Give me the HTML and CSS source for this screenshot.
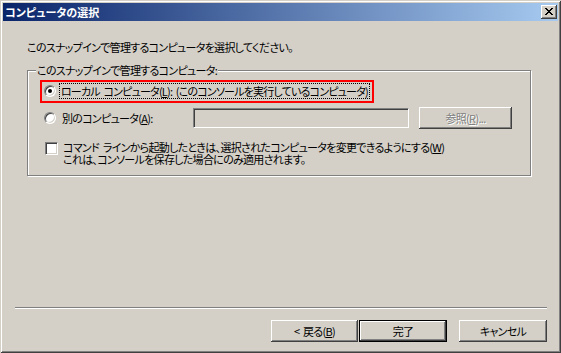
FILE: index.html
```html
<!DOCTYPE html>
<html lang="ja">
<head>
<meta charset="utf-8">
<title>コンピュータの選択</title>
<link rel="stylesheet" href="styles.css">
</head>
<body>
<div class="window">
  <div class="titlebar">
    <span class="title">コンピュータの選択</span>
    <span class="close"><svg width="8" height="7" viewBox="0 0 8 7" shape-rendering="crispEdges"><path d="M0 0h2v1h-2zM1 1h2v1h-2zM2 2h2v1h-2zM3 3h2v1h-2zM2 4h2v1h-2zM1 5h2v1h-2zM0 6h2v1h-2zM6 0h2v1h-2zM5 1h2v1h-2zM4 2h2v1h-2zM4 4h2v1h-2zM5 5h2v1h-2zM6 6h2v1h-2z" fill="#000"/></svg></span>
  </div>
  <div class="content">
    <div class="intro">このスナップインで管理するコンピュータを選択してください。</div>
    <div class="group">
      <div class="legend">このスナップインで管理するコンピュータ:</div>
      <div class="row row-local">
        <span class="radio checked"></span>
        <span class="label focus">ローカル コンピュータ(<u>L</u>): (このコンソールを実行しているコンピュータ)</span>
      </div>
      <div class="row row-other">
        <span class="radio"></span>
        <span class="label other-label">別のコンピュータ(<u>A</u>):</span>
        <span class="textbox"></span>
        <span class="btn disabled browse">参照(<u>R</u>)...</span>
      </div>
      <div class="row row-check">
        <span class="checkbox"></span>
        <span class="check-text"><span class="line">コマンド ラインから起動したときは、選択されたコンピュータを変更できるようにする(<u>W</u>)</span><span class="line">これは、コンソールを保存した場合にのみ適用されます。</span></span>
      </div>
      <div class="highlight"></div>
    </div>
    <div class="separator"></div>
    <div class="buttons">
      <span class="btn back">&lt; 戻る(<u>B</u>)</span>
      <span class="btn default finish">完了</span>
      <span class="btn cancel">キャンセル</span>
    </div>
  </div>
</div>
</body>
</html>
```
FILE: styles.css
```css
html, body {
  margin: 0;
  padding: 0;
  background: #d4d0c8;
}

.window {
  width: 561px;
  height: 353px;
  box-sizing: border-box;
  padding: 3px;
  background: #d4d0c8;
  box-shadow: inset 1px 1px #d4d0c8, inset -1px -1px #404040, inset 2px 2px #ffffff, inset -2px -2px #808080;
  display: flex;
  flex-direction: column;
  font-family: "Noto Sans CJK JP", sans-serif;
  font-size: 11px;
  letter-spacing: -0.7px;
  word-spacing: 2px;
  font-feature-settings: "palt";
  color: #000;
}

.titlebar {
  height: 18px;
  flex: none;
  display: flex;
  align-items: center;
  justify-content: space-between;
  padding: 0 1px 0 2px;
  background: linear-gradient(to right, #0a246a, #a6caf0);
  color: #fff;
}

.title {
  font-weight: bold;
  font-size: 11px;
  letter-spacing: 0;
  line-height: 14px;
}

.close {
  width: 16px;
  height: 14px;
  box-sizing: border-box;
  background: #d4d0c8;
  box-shadow: inset -1px -1px #404040, inset 1px 1px #ffffff, inset -2px -2px #808080;
  display: flex;
  align-items: center;
  justify-content: center;
  padding-bottom: 1px;
}

.close svg {
  display: block;
}

.content {
  flex: 1;
  display: flex;
  flex-direction: column;
  padding: 0 11px 8px 12px;
}

.intro {
  margin: 19px 0 0 12px;
  line-height: 14px;
}

.group {
  position: relative;
  margin: 16px 0 0 12px;
  width: 504px;
  height: 106px;
  box-sizing: border-box;
  border: 1px solid #808080;
  box-shadow: inset 1px 1px #ffffff, 1px 1px #ffffff;
  padding: 0 0 0 16px;
}

.legend {
  width: fit-content;
  margin: -8px 0 0 -8px;
  padding: 0 1px;
  line-height: 14px;
  background: #d4d0c8;
}

.row {
  display: flex;
  align-items: center;
}

.row-local {
  height: 16px;
  margin-top: 6px;
}

.row-other {
  height: 22px;
  margin-top: 8px;
}

.row-check {
  align-items: flex-start;
  margin-top: 13px;
  margin-left: 1px;
}

.radio {
  position: relative;
  flex: none;
  width: 12px;
  height: 12px;
  box-sizing: border-box;
  border-radius: 50%;
  border: 1px solid;
  border-color: #808080 #ffffff #ffffff #808080;
  background: #fff;
  box-shadow: inset 1px 1px #404040, inset -1px -1px #d4d0c8;
}

.radio.checked::after {
  content: "";
  position: absolute;
  left: 3px;
  top: 3px;
  width: 4px;
  height: 4px;
  border-radius: 50%;
  background: #000;
}

.label {
  margin-left: 3px;
  padding: 0 1px;
  line-height: 14px;
  white-space: nowrap;
}

.focus {
  border: 1px dotted #000;
  letter-spacing: -0.8px;
}

.other-label {
  width: 133px;
  margin-left: 4px;
  border: 1px solid transparent;
  box-sizing: border-box;
}

.textbox {
  width: 216px;
  height: 20px;
  box-sizing: border-box;
  border: 1px solid;
  border-color: #808080 #ffffff #ffffff #808080;
  box-shadow: inset 1px 1px #404040, inset -1px -1px #d4d0c8;
  background: #d4d0c8;
}

.btn {
  display: flex;
  align-items: center;
  justify-content: center;
  height: 22px;
  box-sizing: border-box;
  background: #d4d0c8;
  box-shadow: inset -1px -1px #404040, inset 1px 1px #ffffff, inset -2px -2px #808080;
  line-height: 14px;
  white-space: nowrap;
}

.btn.disabled {
  color: #808080;
  text-shadow: 1px 1px #ffffff;
}

.browse {
  width: 93px;
  margin-left: 10px;
}

.checkbox {
  flex: none;
  width: 13px;
  height: 13px;
  box-sizing: border-box;
  border: 1px solid;
  border-color: #808080 #ffffff #ffffff #808080;
  box-shadow: inset 1px 1px #404040, inset -1px -1px #d4d0c8;
  background: #fff;
}

.check-text {
  display: flex;
  flex-direction: column;
  margin-left: 5px;
  margin-top: -1px;
}

.line {
  display: block;
  height: 12px;
  line-height: 12px;
  white-space: nowrap;
}

.highlight {
  position: absolute;
  left: 12px;
  top: 9px;
  width: 334px;
  height: 23px;
  border: 2px solid #ff0000;
  box-sizing: border-box;
}

.separator {
  margin-top: auto;
  height: 0;
  border-top: 1px solid #808080;
  border-bottom: 1px solid #ffffff;
}

.buttons {
  display: flex;
  justify-content: flex-end;
  margin-top: 11px;
}

.back {
  width: 87px;
}

.finish {
  width: 88px;
  margin-left: 1px;
  border: 1px solid #000;
}

.cancel {
  width: 88px;
  margin-left: 12px;
}
```
